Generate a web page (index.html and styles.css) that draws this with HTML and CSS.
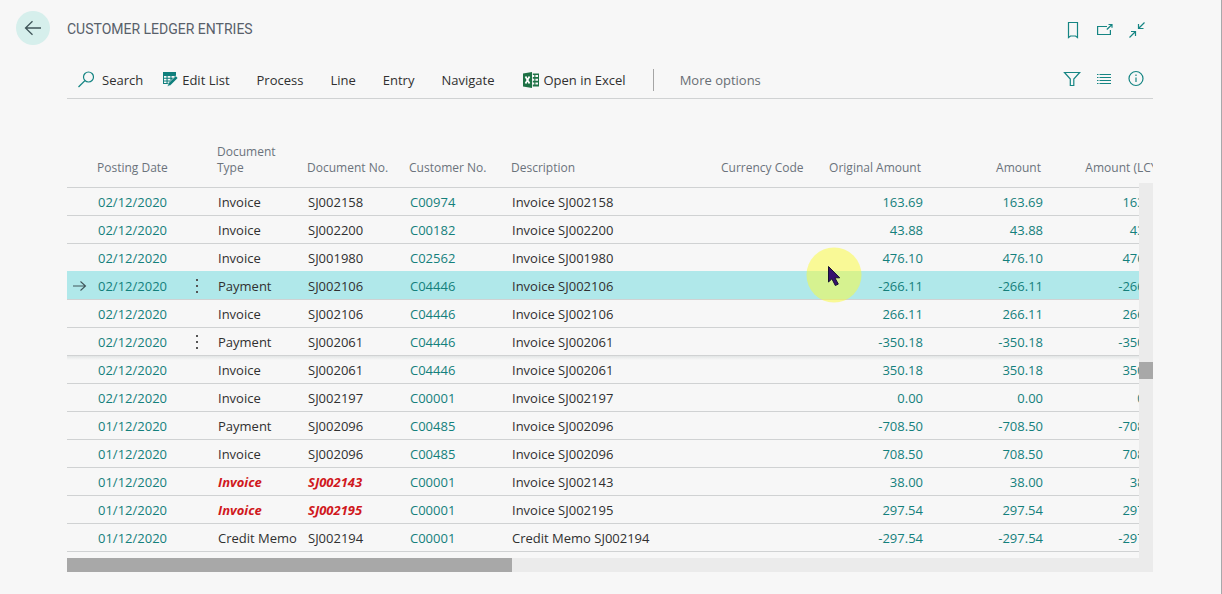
FILE: index.html
```html
<!DOCTYPE html>
<html lang="en">
<head>
<meta charset="utf-8">
<title>Customer Ledger Entries</title>
<link rel="stylesheet" href="styles.css">
</head>
<body>
<div class="page">
  <header class="page-header">
    <button class="back" aria-label="Back">
      <svg width="18" height="16" viewBox="0 0 18 16"><path d="M17 8H1.5M8.5 1.2L1.5 8l7 6.8"/></svg>
    </button>
    <h1 class="title">CUSTOMER LEDGER ENTRIES</h1>
    <div class="icon-group">
      <button class="icon-button" aria-label="Bookmark"><svg width="16" height="18" viewBox="0 0 16 18"><path d="M3.500 1.500h9v15l-2-1.500h-5l-2 1.500z"/></svg></button>
      <button class="icon-button" aria-label="Open in new window"><svg width="16" height="18" viewBox="0 0 16 18"><path d="M10 5.500H.600v8h12.800V9M9.800 8.500L15 3.500M11.500 3.500H15v3.200"/></svg></button>
      <button class="icon-button" aria-label="Collapse"><svg width="16" height="18" viewBox="0 0 16 18"><path d="M15.500 1.500L9.500 7.500M9.500 3v4.500h5M.500 16.500l6-6M2 10.500h4.500V15"/></svg></button>
    </div>
  </header>
  <main class="content">
    <nav class="toolbar" aria-label="Actions">
      <button class="action search"><svg class="line-icon" width="16" height="17" viewBox="0 0 16 17"><circle cx="10.500" cy="6" r="5"/><path d="M6.800 9.800L.500 16"/></svg>Search</button>
      <button class="action edit"><svg width="15" height="15" viewBox="0 0 15 15"><path fill="#0f7f7c" d="M0 0h13v4h-1L6 12H0z"/><path fill="#f7f7f7" d="M1 4h2.500v1.700H1zM4.600 4h2.800v1.700H4.600zM8.500 4h2.800v1.700H8.500zM1 6.800h2.500v1.600H1zM4.600 6.800h2.800v1.600H4.600zM1 9.500h2.500v1.500H1zM4.600 9.500h1.600v1.500H4.600z"/><path fill="#0f7f7c" stroke="#f7f7f7" stroke-width=".6" d="M12.700 3.800l2.200 2.200-7.300 7.300-3.200 1.300 1-3.500z"/></svg>Edit List</button>
      <button class="action">Process</button>
      <button class="action">Line</button>
      <button class="action">Entry</button>
      <button class="action">Navigate</button>
      <button class="action excel"><svg width="16" height="16" viewBox="0 0 16 16"><path fill="#1e7145" d="M0 1.500L9 0v16L0 14.500z"/><path fill="#1e7145" d="M9.800 1.500H16v13H9.800z"/><path fill="#f7f7f7" d="M9 3h2.300v2H9zM12.400 3H15v2h-2.600zM9 6.800h2.300v2H9zM12.400 6.800H15v2h-2.600zM9 10.600h2.300v2H9zM12.400 10.600H15v2h-2.600z"/><path fill="none" stroke="#fff" stroke-width="1.700" d="M2.500 4.500l4 7M6.500 4.500l-4 7"/></svg>Open in Excel</button>
      <span class="divider"></span>
      <button class="action more">More options</button>
      <div class="icon-group">
        <button class="icon-button" aria-label="Filter"><svg width="18" height="18" viewBox="0 0 18 18"><path d="M1.500 2.500h15.200L10.800 9v6.500H7.300V9z"/></svg></button>
        <button class="icon-button" aria-label="List view"><svg width="16" height="18" viewBox="0 0 16 18"><path d="M1 4.500h1.500M3.500 4.500H15M1 7.500h1.500M3.500 7.500H15M1 10.500h1.500M3.500 10.500H15M1 13.500h1.500M3.500 13.500H15"/></svg></button>
        <button class="icon-button" aria-label="Details"><svg width="16" height="18" viewBox="0 0 16 18"><circle cx="8" cy="8.500" r="7"/><path d="M8 7.500V12M8 4.500V6"/></svg></button>
      </div>
    </nav>
    <div class="grid">
      <table class="entries">
        <colgroup><col class="c-mark"><col class="c-date"><col class="c-menu"><col class="c-type"><col class="c-no"><col class="c-no"><col><col class="c-currency"><col class="c-amount"><col class="c-amount"><col class="c-amount"></colgroup>
        <thead><tr><th></th><th>Posting Date</th><th></th><th>Document<br>Type</th><th>Document No.</th><th>Customer No.</th><th>Description</th><th>Currency Code</th><th class="num">Original Amount</th><th class="num">Amount</th><th class="num">Amount (LCY)</th></tr></thead>
        <tbody id="rows"></tbody>
      </table>
      <div class="v-scroll"><div class="v-thumb"></div></div>
      <svg class="pointer" width="56" height="56" viewBox="0 0 56 56"><circle cx="28" cy="28" r="27.500" fill="#fbfb35" fill-opacity=".5"/><path fill="#36106f" stroke="#151030" stroke-width="1" d="M22.500 19.500v15.500l3.400-3.200 3.400 6.700 3-1.400-3.400-6.300h4.800z"/></svg>
    </div>
    <div class="h-scroll"><div class="h-thumb"></div></div>
  </main>
</div>
<script src="entries.js"></script>
</body>
</html>
```
FILE: styles.css
```css
* { box-sizing: border-box; }
body {
  margin: 0;
  background: #f7f7f7;
  color: #303030;
  font: 13px/16px "Open Sans", "Noto Sans", sans-serif;
}
button {
  margin: 0;
  padding: 0;
  border: 0;
  background: none;
  color: inherit;
  font: inherit;
}
svg { display: block; flex: none; }
a { color: #14807c; text-decoration: none; }
.page {
  min-height: 100vh;
  border-right: 1px solid #a8a8ab;
}
.page-header {
  display: flex;
  align-items: center;
  padding: 11px 68px 0 16px;
}
.back {
  display: flex;
  align-items: center;
  justify-content: center;
  width: 34px;
  height: 34px;
  border-radius: 50%;
  background: #d6efec;
}
.back svg { fill: none; stroke: #40565a; stroke-width: 1.3; }
.title {
  margin: 0;
  padding: 2px 0 0 17px;
  color: #58606a;
  font: 400 14px/18px Roboto, sans-serif;
}
.icon-group {
  display: flex;
  gap: 16px;
  margin-left: auto;
  padding-right: 8px;
}
.page-header .icon-group { padding-top: 4px; }
.icon-button {
  display: flex;
  align-items: center;
  justify-content: center;
  width: 16px;
  height: 18px;
}
.icon-button svg, .line-icon { fill: none; stroke: #158583; stroke-width: 1.2; }
.content { padding: 0 68px 0 67px; }
.toolbar {
  display: flex;
  align-items: center;
  height: 54px;
  padding: 16px 0 0 11px;
  border-bottom: 1px solid #d0d2d3;
}
.toolbar .icon-group { padding: 0 9px 2px 0; }
.action {
  display: flex;
  align-items: center;
  gap: 4px;
  margin-right: 27px;
  white-space: nowrap;
}
.search { gap: 8px; margin-right: 20px; }
.excel { padding-left: 2px; }
.divider { width: 1px; height: 22px; margin-right: 26px; background: #a5a5a5; }
.more { margin-right: 0; color: #686e74; }
.grid {
  position: relative;
  overflow: hidden;
  padding: 41px 0 6px;
}
.entries {
  width: calc(100% + 18px);
  table-layout: fixed;
  border-spacing: 0;
}
.c-mark, .c-menu { width: 30px; }
.c-date, .c-type, .c-currency { width: 90px; }
.c-no { width: 102px; }
.c-amount { width: 120px; }
th {
  height: 48px;
  padding: 0 0 11px;
  border-bottom: 1px solid #d0d2d3;
  color: #6b737c;
  font-size: 12px;
  font-weight: 400;
  text-align: left;
  vertical-align: bottom;
  white-space: nowrap;
}
td {
  height: 28px;
  padding: 0 0 0 1px;
  border-bottom: 1px solid #d0d2d3;
  white-space: nowrap;
}
th.num { padding-right: 10px; text-align: right; }
td.num { padding-right: 8px; text-align: right; }
.selected td { background: #b0e8ea; box-shadow: 0 -1px #b0e8ea; }
.hovered + tr td { background: linear-gradient(#e2e5e5, #f7f7f7 4px); }
.mark { padding-left: 5px; }
.mark svg { fill: none; stroke: #40565a; stroke-width: 1.1; }
.menu { padding-left: 8px; }
.menu svg { fill: #555; }
.overdue { color: #d01820; font-weight: 700; font-style: italic; }
.v-scroll {
  position: absolute;
  top: 84px;
  right: 0;
  bottom: 0;
  width: 14px;
  background: #ebebeb;
}
.v-thumb { height: 17px; margin-top: 179px; background: #a8a8a8; }
.pointer { position: absolute; top: 148px; left: 739px; }
.h-scroll { height: 14px; background: #ebebeb; }
.h-thumb { width: 41%; height: 100%; background: #a8a8a8; }
```
FILE: entries.js
```js
const entries = [
  ["02/12/2020", "Invoice", "SJ002158", "C00974", "163.69"],
  ["02/12/2020", "Invoice", "SJ002200", "C00182", "43.88"],
  ["02/12/2020", "Invoice", "SJ001980", "C02562", "476.10"],
  ["02/12/2020", "Payment", "SJ002106", "C04446", "-266.11", "selected"],
  ["02/12/2020", "Invoice", "SJ002106", "C04446", "266.11"],
  ["02/12/2020", "Payment", "SJ002061", "C04446", "-350.18", "hovered"],
  ["02/12/2020", "Invoice", "SJ002061", "C04446", "350.18"],
  ["02/12/2020", "Invoice", "SJ002197", "C00001", "0.00"],
  ["01/12/2020", "Payment", "SJ002096", "C00485", "-708.50"],
  ["01/12/2020", "Invoice", "SJ002096", "C00485", "708.50"],
  ["01/12/2020", "Invoice", "SJ002143", "C00001", "38.00", "late"],
  ["01/12/2020", "Invoice", "SJ002195", "C00001", "297.54", "late"],
  ["01/12/2020", "Credit Memo", "SJ002194", "C00001", "-297.54"]
];
const arrow = '<svg width="15" height="12" viewBox="0 0 15 12"><path d="M1 6h12.500M8.500 1.500L13.500 6l-5 4.500"/></svg>';
const dots = '<svg width="4" height="16" viewBox="0 0 4 16"><path d="M1 1h2v2H1zM1 7h2v2H1zM1 13h2v2H1z"/></svg>';
document.getElementById("rows").innerHTML = entries.map(([date, type, no, customer, amount, state = ""]) => {
  const active = state === "selected" || state === "hovered";
  const tone = state === "late" ? "overdue" : "";
  const label = type === "Credit Memo" ? type : "Invoice";
  const money = `<td class="num"><a href="#">${amount}</a></td>`;
  return `<tr class="${state}"><td class="mark">${state === "selected" ? arrow : ""}</td>
    <td><a href="#">${date}</a></td><td class="menu">${active ? dots : ""}</td>
    <td class="${tone}">${type}</td><td class="${tone}">${no}</td>
    <td><a href="#">${customer}</a></td><td>${label} ${no}</td><td></td>${money.repeat(3)}</tr>`;
}).join("");
```
